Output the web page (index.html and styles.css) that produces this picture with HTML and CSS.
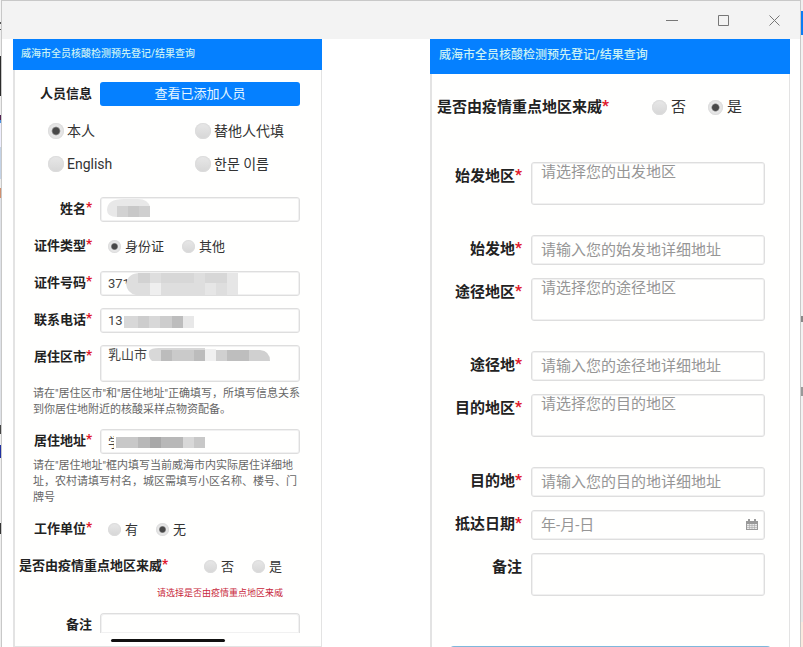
FILE: index.html
```html
<!DOCTYPE html>
<html lang="zh-CN">
<head>
<meta charset="utf-8">
<title>威海市全员核酸检测预先登记/结果查询</title>
<link rel="stylesheet" href="styles.css">
</head>
<body>
<div class="edge edge-left"></div>
<div class="window">
  <header class="titlebar">
    <button type="button" class="win-btn" aria-label="最小化"><svg width="13" height="13" viewBox="0 0 13 13"><path d="M0 6.5h12"/></svg></button>
    <button type="button" class="win-btn" aria-label="最大化"><svg width="13" height="13" viewBox="0 0 13 13"><path d="M1.5 1.5h10v10h-10z"/></svg></button>
    <button type="button" class="win-btn" aria-label="关闭"><svg width="13" height="13" viewBox="0 0 13 13"><path d="M1.500 1.500l10 10M11.500 1.500l-10 10"/></svg></button>
  </header>
  <main class="panels">
    <section class="panel person">
      <h1 class="bar">威海市全员核酸检测预先登记/结果查询</h1>
      <form class="form">
        <div class="row">
          <span class="label">人员信息</span>
          <button type="button" class="primary">查看已添加人员</button>
        </div>
        <div class="who">
          <label class="choice"><input type="radio" name="who" checked>本人</label>
          <label class="choice"><input type="radio" name="who">替他人代填</label>
          <label class="choice"><input type="radio" name="who">English</label>
          <label class="choice"><input type="radio" name="who"><span lang="ko">한문 이름</span></label>
        </div>
        <div class="row">
          <label class="label" for="name">姓名<b>*</b></label>
          <div class="field"><input class="box" id="name" type="text">
            <svg class="mask" aria-hidden="true"><path fill="#e8e8e8" d="M7 13Q7 2 24 2h14q10 0 12 8v10H17Q7 20 7 13z"/><path fill="#d2d2d2" d="M17 9h11v11H17z"/><path fill="#c8c8c8" d="M28 9h11v11H28z"/><path fill="#cfcfcf" d="M39 9h11v11H39z"/></svg></div>
        </div>
        <div class="row">
          <span class="label">证件类型<b>*</b></span>
          <div class="choices">
            <label class="choice"><input type="radio" name="idtype" checked>身份证</label>
            <label class="choice"><input type="radio" name="idtype">其他</label>
          </div>
        </div>
        <div class="row">
          <label class="label" for="idno">证件号码<b>*</b></label>
          <div class="field"><input class="box" id="idno" type="text" value="371">
            <svg class="mask" aria-hidden="true"><path fill="#fff" d="M24 13h6v10h-6z"/><path fill="#dedede" d="M26 13Q28 2 40 2h98v22H36Q27 22 26 13z"/><path fill="#d2d2d2" d="M38 2h12v10H38z"/><path fill="#efefef" d="M50 12h11v12H50z"/><path fill="#d7d7d7" d="M61 2h33v10H61zM105 2h22v10h-22z"/><path fill="#e6e6e6" d="M105 12h11v12h-11zM127 2h11v22h-11z"/></svg></div>
        </div>
        <div class="row">
          <label class="label" for="phone">联系电话<b>*</b></label>
          <div class="field"><input class="box" id="phone" type="text" value="13">
            <svg class="mask" aria-hidden="true"><path fill="#d8d8d8" d="M24 8h36v12H24z"/><path fill="#cdcdcd" d="M38 8h11v12H38zM60 8h12v12H60z"/><path fill="#bdbdbd" d="M72 8h11v12H72z"/><path fill="#e8e8e8" d="M83 8h11v12H83z"/></svg></div>
        </div>
        <div class="row last-field">
          <label class="label" for="area">居住区市<b>*</b></label>
          <div class="field"><textarea class="box tall" id="area">乳山市</textarea>
            <svg class="mask" aria-hidden="true"><path fill="#d8d8d8" d="M49 6q2-3 10-3h46v13H52q-4-3-3-10z"/><path fill="#bcbcbc" d="M61 5h11v11H61zM94 5h11v11H94z"/><path fill="#cacaca" d="M72 5h22v11H72z"/><path fill="#f0f0f0" d="M105 4h11v12h-11z"/><path fill="#d0d0d0" d="M116 5h44q10 1 10 11h-54z"/><path fill="#bebebe" d="M127 5h22v11h-22z"/></svg></div>
        </div>
        <p class="hint">请在"居住区市"和"居住地址"正确填写，所填写信息关系<br>到你居住地附近的核酸采样点物资配备。</p>
        <div class="row last-field">
          <label class="label" for="address">居住地址<b>*</b></label>
          <div class="field"><input class="box" id="address" type="text" value="学">
            <svg class="mask" aria-hidden="true"><path fill="#fff" d="M14 4h10v18H14z"/><path fill="#c8c8c8" d="M16 8h89v11H16z"/><path fill="#b8b8b8" d="M38 8h12v11H38zM61 8h22v11H61z"/><path fill="#a8a8a8" d="M50 8h11v11H50z"/><path fill="#d8d8d8" d="M83 8h11v11H83z"/></svg></div>
        </div>
        <p class="hint">请在"居住地址"框内填写当前威海市内实际居住详细地<br>址，农村请填写村名，城区需填写小区名称、楼号、门<br>牌号</p>
        <div class="row">
          <span class="label">工作单位<b>*</b></span>
          <div class="choices">
            <label class="choice"><input type="radio" name="work">有</label>
            <label class="choice"><input type="radio" name="work" checked>无</label>
          </div>
        </div>
        <div class="row wide">
          <span class="label">是否由疫情重点地区来威<b>*</b></span>
          <div class="choices">
            <label class="choice"><input type="radio" name="from">否</label>
            <label class="choice"><input type="radio" name="from">是</label>
          </div>
        </div>
        <p class="error">请选择是否由疫情重点地区来威</p>
        <div class="row cut">
          <label class="label" for="note">备注</label>
          <div class="field"><textarea class="box" id="note"></textarea></div>
        </div>
      </form>
      <div class="home-bar"></div>
    </section>

    <section class="panel trip">
      <h1 class="bar">威海市全员核酸检测预先登记/结果查询</h1>
      <form class="form">
        <div class="row wide">
          <span class="label">是否由疫情重点地区来威<b>*</b></span>
          <div class="choices">
            <label class="choice"><input type="radio" name="risk">否</label>
            <label class="choice"><input type="radio" name="risk" checked>是</label>
          </div>
        </div>
        <div class="row spaced">
          <label class="label" for="start-area">始发地区<b>*</b></label>
          <div class="field"><textarea class="box tall" id="start-area" placeholder="请选择您的出发地区"></textarea></div>
        </div>
        <div class="row">
          <label class="label" for="start">始发地<b>*</b></label>
          <div class="field"><input class="box" id="start" type="text" placeholder="请输入您的始发地详细地址"></div>
        </div>
        <div class="row spaced">
          <label class="label" for="via-area">途径地区<b>*</b></label>
          <div class="field"><textarea class="box tall" id="via-area" placeholder="请选择您的途径地区"></textarea></div>
        </div>
        <div class="row">
          <label class="label" for="via">途径地<b>*</b></label>
          <div class="field"><input class="box" id="via" type="text" placeholder="请输入您的途径地详细地址"></div>
        </div>
        <div class="row spaced">
          <label class="label" for="dest-area">目的地区<b>*</b></label>
          <div class="field"><textarea class="box tall" id="dest-area" placeholder="请选择您的目的地区"></textarea></div>
        </div>
        <div class="row">
          <label class="label" for="dest">目的地<b>*</b></label>
          <div class="field"><input class="box" id="dest" type="text" placeholder="请输入您的目的地详细地址"></div>
        </div>
        <div class="row">
          <label class="label" for="date">抵达日期<b>*</b></label>
          <div class="field"><input class="box" id="date" type="text" placeholder="年-月-日">
            <svg class="calendar" viewBox="0 0 12 12" aria-hidden="true"><path fill="#999" d="M0 2h2V0h2v2h4V0h2v2h2v9H0z"/><path fill="#e9e9e9" d="M1 5h10v5H1z"/><path stroke="#a8a8a8" d="M1 6.500h10M1 8.500h10M3.500 5v5M6 5v5M8.500 5v5" stroke-width=".6"/></svg></div>
        </div>
        <div class="row end">
          <label class="label" for="remark">备注</label>
          <div class="field"><textarea class="box tall" id="remark"></textarea></div>
        </div>
        <button type="button" class="submit" aria-label="提交"></button>
      </form>
    </section>
  </main>
</div>
<div class="edge edge-right"></div>
</body>
</html>
```
FILE: styles.css
```css
* { box-sizing: border-box; }

html { overflow: hidden; }

body {
  display: flex;
  height: 100vh;
  margin: 0;
  overflow: hidden;
  background: #fff;
  color: #333;
  font-family: Roboto, "Noto Sans CJK SC", sans-serif;
}

/* slivers of the page behind the window */
.edge-left {
  width: 1px;
  background: linear-gradient(#f4f4f4 22px, #555 22px 24px, #eee 24px 29px, #555 29px 30px, #eee 30px 56px, #2b2b2b 56px 96px, #eee 96px 115px, #502050 115px 120px, #4a90e0 120px 123px, #eef 123px 147px, #c3d2e6 147px 179px, #eee 179px 188px, #d09070 188px 198px, #dfe2e8 198px 425px, #444 425px 434px, #eee 434px 445px, #2030a0 445px 458px, #eee 458px 523px, #333 523px 534px, #eee 534px);
}

.edge-right {
  width: 2px;
  background: linear-gradient(#f0f0f0 11px, #0a7cf5 11px 35px, #f2f2f2 35px 316px, #888 316px 322px, #f2f2f2 322px 387px, #999 387px 396px, #f2f2f2 396px 570px, #e8e8e8 570px 622px, #fae9de 622px);
}

.window {
  display: flex;
  flex: 1;
  flex-direction: column;
  min-width: 0;
  overflow: hidden;
  border: 1px solid #c8c8c8;
  border-bottom: 0;
  background: #fff;
}

.titlebar {
  display: flex;
  flex: none;
  justify-content: flex-end;
  height: 38px;
  background: #f3f3f3;
}

.win-btn {
  display: grid;
  place-items: center;
  width: 51px;
  padding: 0;
  border: 0;
  background: none;
}

.win-btn svg {
  fill: none;
  stroke: #777;
}

.panels {
  display: grid;
  flex: 1;
  grid-template-columns: 309fr 360fr;
  column-gap: 108px;
  min-height: 0;
  padding: 0 10px 0 11px;
}

.panel {
  display: flex;
  flex-direction: column;
  min-width: 0;
  min-height: 0;
  overflow: hidden;
  border: 0 solid #e3e3e3;
  background: linear-gradient(#e3e3e3, #e3e3e3) left / 2px 100% no-repeat,
    linear-gradient(#e3e3e3, #e3e3e3) right / 1px 100% no-repeat, #fffffe;
}

.bar {
  flex: none;
  margin: 0;
  background: #0580ff;
  color: #c9f1f5;
  font-weight: 500;
}

.form {
  display: flex;
  flex: none;
  flex-direction: column;
}

.row {
  display: grid;
  align-items: start;
}

.label {
  display: flex;
  justify-content: flex-end;
  color: #222;
  font-weight: 700;
  white-space: nowrap;
}

.label b {
  color: #e0182d;
}

.field {
  position: relative;
  display: flex;
}

.box {
  width: 100%;
  border: 1px solid #dedede;
  border-radius: 3px;
  background: #fffffe;
  box-shadow: inset 0 0 0 1px #f1f1f1;
  color: #444;
  font-family: inherit;
  resize: none;
  outline: 0;
  overflow: hidden;
}

.box::placeholder {
  color: #969696;
  opacity: 1;
}

.mask {
  position: absolute;
  inset: 0;
  width: 100%;
  height: 100%;
  pointer-events: none;
}

.choices,
.choice {
  display: flex;
  align-items: center;
}

.choice {
  white-space: nowrap;
}

.choice input {
  flex: none;
  margin: 0;
  border-radius: 50%;
  appearance: none;
  background: linear-gradient(#e8e8e8, #d6d6d6);
  box-shadow: inset 0 0 1px 1px #dcdcdc;
}

.choice input:checked {
  background: radial-gradient(circle, #484848 0 28%, #e6e6e6 42%);
}

/* person panel */
.person {
  border-bottom-width: 1px;
}

.person .bar {
  height: 31px;
  padding: 0 8px;
  font-size: 10px;
  line-height: 29px;
}

.person .form {
  padding: 12px 22px 0 0;
}

.person .row {
  grid-template-columns: 79px 1fr;
  column-gap: 8px;
  margin-bottom: 12px;
  font-size: 13px;
  line-height: 24px;
}

.person .label b {
  line-height: 20px;
}

.person .box {
  height: 25px;
  padding: 0 7px;
  font-size: 13px;
  line-height: 18px;
}

.person .tall {
  height: 37px;
}

.person .row.last-field {
  margin-bottom: 4px;
}

.primary {
  height: 24px;
  padding: 0;
  border: 0;
  border-radius: 3px;
  background: #0580ff;
  color: #e4f6ff;
  font: inherit;
}

.who {
  display: grid;
  grid-template-columns: 147px 1fr;
  row-gap: 9px;
  margin: 1px 0 21px;
  padding-left: 35px;
  font-size: 14px;
  line-height: 24px;
}

.who .choice {
  gap: 3px;
}

.who .choice input {
  width: 16px;
  height: 16px;
}

.person .choices {
  gap: 18px;
  min-height: 25px;
  padding-left: 8px;
}

.person .choices .choice {
  gap: 4px;
}

.person .choices input {
  width: 13px;
  height: 13px;
}

.hint {
  margin: 0 0 11px 20px;
  color: #666;
  font-size: 11px;
  line-height: 16px;
  white-space: nowrap;
}

.person .row.wide {
  grid-template-columns: 155px 1fr;
  column-gap: 28px;
  margin-bottom: 7px;
}

.error {
  margin: 0 17px 12px 0;
  color: #c8283c;
  font-size: 9px;
  line-height: 15px;
  text-align: right;
}

.person .row.cut {
  height: 26px;
  margin: 0;
}

.cut .box {
  height: 20px;
  border-bottom: 0;
  border-radius: 4px 4px 0 0;
}

.home-bar {
  flex: none;
  align-self: center;
  width: 114px;
  height: 3px;
  border-radius: 2px;
  background: #111;
}

/* trip panel */
.trip .bar {
  height: 35px;
  padding: 0 9px;
  font-size: 12px;
  line-height: 33px;
}

.trip .form {
  padding: 19px 25px 0 0;
}

.trip .row {
  grid-template-columns: 92px 1fr;
  column-gap: 9px;
  margin-bottom: 13px;
  font-size: 15px;
  line-height: 29px;
}

.trip .label b {
  line-height: 26px;
}

.trip .box {
  height: 30px;
  padding: 0 9px;
  font-size: 15px;
  line-height: 18px;
}

.trip .tall {
  height: 43px;
}

.trip .row.spaced {
  margin-bottom: 30px;
}

.trip .row.wide {
  grid-template-columns: 179px 1fr;
  column-gap: 43px;
  margin-bottom: 40px;
}

.trip .choices {
  gap: 22px;
}

.trip .choice {
  gap: 4px;
}

.trip .choice input {
  width: 15px;
  height: 15px;
}

.calendar {
  position: absolute;
  top: 9px;
  right: 7px;
  width: 12px;
  height: 12px;
}

.trip .row.end {
  margin-bottom: 50px;
}

.submit {
  height: 36px;
  margin: 0 -6px 0 20px;
  border: 0;
  border-radius: 4px;
  background: #7fb8dc;
}
```
